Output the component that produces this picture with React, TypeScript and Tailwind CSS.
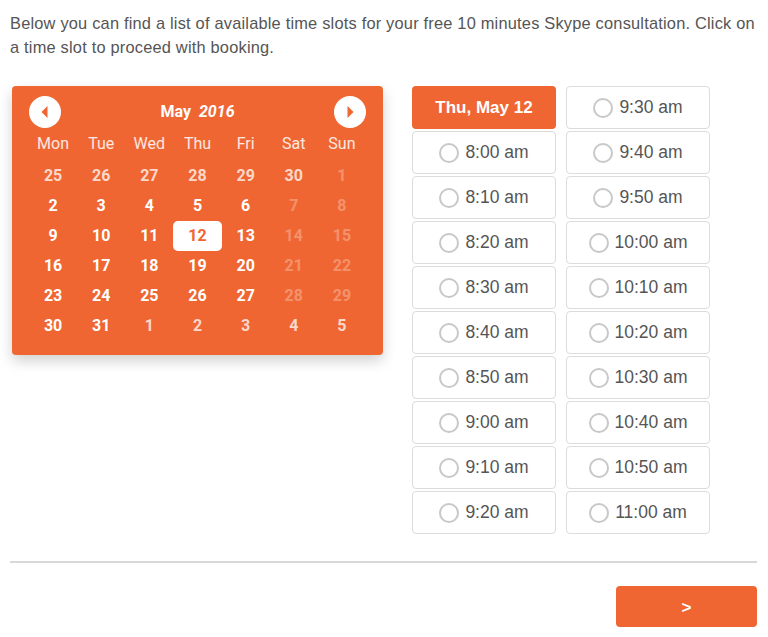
const weeks: [number, string][][] = [
  [[25, "prev"], [26, "prev"], [27, "prev"], [28, "prev"], [29, "prev"], [30, "prev"], [1, "off"]],
  [[2, "day"], [3, "day"], [4, "day"], [5, "day"], [6, "day"], [7, "off"], [8, "off"]],
  [[9, "day"], [10, "day"], [11, "day"], [12, "sel"], [13, "day"], [14, "off"], [15, "off"]],
  [[16, "day"], [17, "day"], [18, "day"], [19, "day"], [20, "day"], [21, "off"], [22, "off"]],
  [[23, "day"], [24, "day"], [25, "day"], [26, "day"], [27, "day"], [28, "off"], [29, "off"]],
  [[30, "day"], [31, "day"], [1, "prev"], [2, "prev"], [3, "prev"], [4, "prev"], [5, "prev"]],
];

const dayNames = ["Mon", "Tue", "Wed", "Thu", "Fri", "Sat", "Sun"];

const leftSlots = ["8:00 am", "8:10 am", "8:20 am", "8:30 am", "8:40 am", "8:50 am", "9:00 am", "9:10 am", "9:20 am"];
const rightSlots = ["9:30 am", "9:40 am", "9:50 am", "10:00 am", "10:10 am", "10:20 am", "10:30 am", "10:40 am", "10:50 am", "11:00 am"];

const dayClass: Record<string, string> = {
  day: "text-white",
  prev: "text-white/75",
  off: "text-white/30",
  sel: "bg-white text-[#ef6632] rounded-[5px]",
};

function Arrow({ dir }: { dir: "left" | "right" }) {
  return (
    <div className="flex h-8 w-8 items-center justify-center rounded-full bg-white">
      <svg width="12" height="14" viewBox="0 0 12 14">
        {dir === "left" ? (
          <path d="M8.5 1 L2.5 7 L8.5 13 Z" fill="#ef6632" />
        ) : (
          <path d="M3.5 1 L9.5 7 L3.5 13 Z" fill="#ef6632" />
        )}
      </svg>
    </div>
  );
}

function Slot({ label }: { label: string }) {
  return (
    <div className="flex h-[43px] items-center justify-center gap-[6px] rounded-[4px] border border-[#dcdcdc] bg-white text-[17.5px] text-[#555]">
      <span className="h-5 w-5 rounded-full border-2 border-[#c8c8c8]" />
      <span>{label}</span>
    </div>
  );
}

export default function App() {
  return (
    <main
      className="min-h-screen w-[768px] bg-white px-[10px] pt-[11px]"
      style={{ fontFamily: '"Liberation Sans", Arial, sans-serif' }}
    >
      <p className="text-[16.4px] leading-6 tracking-[0.2px] text-[#555]">
        Below you can find a list of available time slots for your free 10 minutes Skype consultation. Click on a time
        slot to proceed with booking.
      </p>

      <div className="mt-[27px] flex items-start">
        <div
          className="ml-[2px] w-[371px] rounded-[4px] bg-[#ef6632] px-[17px] pt-[10px] pb-[14px] shadow-[0_6px_14px_rgba(0,0,0,0.18)]"
          style={{ fontFamily: "Roboto, sans-serif" }}
        >
          <div className="flex h-8 items-center justify-between">
            <Arrow dir="left" />
            <div className="text-[16px] font-bold text-white">
              May <span className="ml-1 italic">2016</span>
            </div>
            <Arrow dir="right" />
          </div>
          <div className="grid h-8 grid-cols-7 items-center text-center text-[16px] text-white/85">
            {dayNames.map((d) => (
              <div key={d}>{d}</div>
            ))}
          </div>
          <div className="mt-[1px]">
            {weeks.map((w, i) => (
              <div key={i} className="grid grid-cols-7">
                {w.map(([n, kind], j) => (
                  <div
                    key={j}
                    className={`flex h-[30px] items-center justify-center text-[16px] font-bold ${dayClass[kind]}`}
                  >
                    {n}
                  </div>
                ))}
              </div>
            ))}
          </div>
        </div>

        <div className="ml-[29px] flex gap-[10px]">
          <div className="flex w-[144px] flex-col gap-[2px]">
            <div className="flex h-[43px] items-center justify-center rounded-[4px] bg-[#ef6632] text-[17px] font-bold text-white">
              Thu, May 12
            </div>
            {leftSlots.map((s) => (
              <Slot key={s} label={s} />
            ))}
          </div>
          <div className="flex w-[144px] flex-col gap-[2px]">
            {rightSlots.map((s) => (
              <Slot key={s} label={s} />
            ))}
          </div>
        </div>
      </div>

      <div className="mt-[27px] h-[2px] w-[747px] bg-[#d8d8d8]" />

      <div className="mt-[23px] flex w-[747px] justify-end">
        <button className="flex h-[41px] w-[141px] items-center justify-center rounded-[4px] bg-[#ef6632] pt-[3px] text-[17px] font-bold text-white">
          &gt;
        </button>
      </div>
    </main>
  );
}
